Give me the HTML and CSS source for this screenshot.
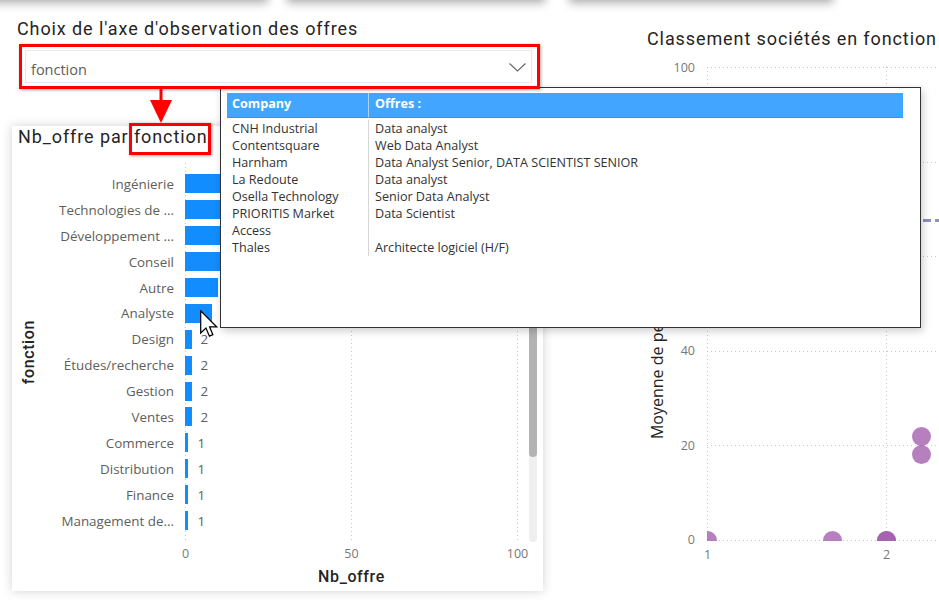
FILE: index.html
```html
<!DOCTYPE html>
<html lang="fr">
<head>
<meta charset="utf-8">
<title>Offres</title>
<link rel="stylesheet" href="styles.css">
</head>
<body>
<div class="top-cards">
  <div class="stub stub-1"></div>
  <div class="stub stub-2"></div>
  <div class="stub stub-3"></div>
</div>

<div class="canvas">
  <div class="left-col">
    <section class="slicer">
      <h2 class="v-title">Choix de l'axe d'observation des offres</h2>
      <div class="dropdown">
        <span>fonction</span>
        <svg class="chev" width="17" height="9" viewBox="0 0 17 9"><polyline points="0.5,0.5 8.5,8 16.5,0.5" fill="none" stroke="#666" stroke-width="1.1"/></svg>
      </div>
    </section>

    <section class="bar-card">
      <h2 class="v-title">Nb_offre par fonction</h2>
      <div class="bar-body">
        <div class="y-title"><span>fonction</span></div>
        <div class="bar-main">
          <div class="bar-grid">
            <div class="gridlines"><i></i><i></i><i></i></div>
            <div class="cat">Ingénierie</div><div class="val-cell"><div class="bar" style="width:99.6px"></div></div>
            <div class="cat">Technologies de ...</div><div class="val-cell"><div class="bar" style="width:66.4px"></div></div>
            <div class="cat">Développement ...</div><div class="val-cell"><div class="bar" style="width:49.8px"></div></div>
            <div class="cat">Conseil</div><div class="val-cell"><div class="bar" style="width:43.2px"></div></div>
            <div class="cat">Autre</div><div class="val-cell"><div class="bar" style="width:33.2px"></div></div>
            <div class="cat">Analyste</div><div class="val-cell"><div class="bar" style="width:26.6px"></div></div>
            <div class="cat">Design</div><div class="val-cell"><div class="bar" style="width:6.6px"></div><span class="val">2</span></div>
            <div class="cat">Études/recherche</div><div class="val-cell"><div class="bar" style="width:6.6px"></div><span class="val">2</span></div>
            <div class="cat">Gestion</div><div class="val-cell"><div class="bar" style="width:6.6px"></div><span class="val">2</span></div>
            <div class="cat">Ventes</div><div class="val-cell"><div class="bar" style="width:6.6px"></div><span class="val">2</span></div>
            <div class="cat">Commerce</div><div class="val-cell"><div class="bar" style="width:3.4px"></div><span class="val">1</span></div>
            <div class="cat">Distribution</div><div class="val-cell"><div class="bar" style="width:3.4px"></div><span class="val">1</span></div>
            <div class="cat">Finance</div><div class="val-cell"><div class="bar" style="width:3.4px"></div><span class="val">1</span></div>
            <div class="cat">Management de...</div><div class="val-cell"><div class="bar" style="width:3.4px"></div><span class="val">1</span></div>
          </div>
          <div class="x-ticks"><span>0</span><span>50</span><span>100</span></div>
          <div class="x-title">Nb_offre</div>
        </div>
        <div class="scroll"><div class="thumb"></div></div>
      </div>
    </section>
  </div>

  <section class="scatter-card">
    <h2 class="v-title">Classement sociétés en fonction</h2>
    <div class="sc-body">
      <div class="sc-ytitle"><span>Moyenne de pertinence</span></div>
      <div class="sc-yticks"><span>100</span><span>80</span><span>60</span><span>40</span><span>20</span><span>0</span></div>
      <div class="sc-main">
        <div class="plot">
          <div class="hlines"><i></i><i></i><i></i><i></i><i></i><i></i></div>
          <div class="vline vline-1"></div>
          <div class="vline vline-2"></div>
          <div class="avg-line"></div>
          <span class="dot" style="left:0px;top:473px"></span>
          <span class="dot" style="left:125px;top:473px"></span>
          <span class="dot" style="left:179px;top:473px"></span>
          <span class="dot" style="left:179px;top:473px"></span>
          <span class="dot" style="left:214px;top:369px"></span>
          <span class="dot" style="left:214px;top:387px"></span>
        </div>
        <div class="sc-xticks"><span>1</span><span>2</span></div>
      </div>
    </div>
  </section>
</div>

<div class="tooltip">
  <div class="tt-table">
    <div class="tt-head c1">Company</div><div class="tt-head c2">Offres :</div>
    <div class="tt-cell c1">CNH Industrial</div><div class="tt-cell c2">Data analyst</div>
    <div class="tt-cell c1">Contentsquare</div><div class="tt-cell c2">Web Data Analyst</div>
    <div class="tt-cell c1">Harnham</div><div class="tt-cell c2">Data Analyst Senior, DATA SCIENTIST SENIOR</div>
    <div class="tt-cell c1">La Redoute</div><div class="tt-cell c2">Data analyst</div>
    <div class="tt-cell c1">Osella Technology</div><div class="tt-cell c2">Senior Data Analyst</div>
    <div class="tt-cell c1">PRIORITIS Market</div><div class="tt-cell c2">Data Scientist</div>
    <div class="tt-cell c1">Access</div><div class="tt-cell c2"></div>
    <div class="tt-cell c1">Thales</div><div class="tt-cell c2">Architecte logiciel (H/F)</div>
  </div>
</div>

<div class="anno-box anno-dd"></div>
<div class="anno-box anno-title"></div>
<svg class="anno-arrow" width="22" height="37" viewBox="0 0 22 37">
  <rect x="9.5" y="0" width="3" height="15" fill="#ff0000"/>
  <polygon points="0,13 22,13 11,36" fill="#ff0000"/>
</svg>

<svg class="cursor" width="18" height="28" viewBox="0 0 13 20">
  <path d="M0.5,0.5 L0.5,16.5 L4.3,12.9 L6.8,18.8 L9.3,17.7 L6.9,12 L12,12 Z" fill="#fff" stroke="#000" stroke-width="0.9" stroke-linejoin="miter"/>
</svg>
</body>
</html>
```

FILE: styles.css
```css
* { box-sizing: border-box; margin: 0; padding: 0; }

html, body {
  width: 939px;
  height: 613px;
  overflow: hidden;
  background: #ffffff;
}

body {
  position: relative;
  font-family: "Open Sans", "Noto Sans", sans-serif;
  color: #252423;
}

/* cards cut by the top edge */
.top-cards { display: flex; height: 0; }
.stub {
  height: 20px;
  margin-top: -20px;
  background: #fff;
  box-shadow: 0 3px 10px rgba(0, 0, 0, 0.32);
}
.stub-1 { margin-left: -10px; width: 278px; }
.stub-2 { margin-left: 19px; width: 258px; }
.stub-3 { margin-left: 24px; width: 264px; }

.canvas {
  display: flex;
  align-items: flex-start;
  padding-top: 16px;
}

.v-title {
  font-family: Roboto, "DejaVu Sans", sans-serif;
  font-weight: 400;
  font-size: 18px;
  line-height: 22px;
  letter-spacing: 0.9px;
  color: #252423;
  white-space: nowrap;
}

/* left column */
.left-col {
  margin-left: 11px;
  width: 534px;
  flex: none;
  display: flex;
  flex-direction: column;
}

.slicer {
  height: 110px;
  background: #fff;
  padding: 2px 0 0 6px;
}

.dropdown {
  margin: 10px 0 0 8px;
  width: 507px;
  height: 33px;
  border: 1px solid #e8e8e8;
  display: flex;
  align-items: center;
  justify-content: space-between;
  padding: 5px 5px 0 5px;
  font-size: 14.5px;
  color: #605e5c;
}
.chev { display: block; margin-top: -3px; }

.bar-card {
  margin-left: 1px;
  width: 531px;
  height: 465px;
  background: #fff;
  box-shadow: 0 0 10px rgba(0, 0, 0, 0.18);
}
.bar-card .v-title { padding-left: 6px; }

.bar-body {
  display: flex;
  align-items: flex-start;
  margin-top: 15px;
}

.y-title {
  width: 32px;
  height: 378px;
  display: flex;
  align-items: center;
  justify-content: center;
  margin-right: 2px;
}
.y-title span {
  writing-mode: vertical-rl;
  transform: rotate(180deg);
  font-family: Roboto, sans-serif;
  font-weight: 500;
  font-size: 16px;
  letter-spacing: 0.6px;
  color: #252423;
}

.bar-main { width: 483px; }

.bar-grid {
  position: relative;
  display: grid;
  grid-template-columns: 128px 344px;
  column-gap: 11px;
  grid-auto-rows: 25.9px;
  padding: 8px 0 7px;
}

.gridlines {
  position: absolute;
  top: 0;
  bottom: 0;
  left: 139px;
  width: 333px;
  display: flex;
  justify-content: space-between;
}
.gridlines i {
  width: 1px;
  background: repeating-linear-gradient(to bottom, #c8c8c8 0 1px, transparent 1px 4px);
}

.cat {
  align-self: center;
  text-align: right;
  white-space: nowrap;
  font-size: 13.4px;
  line-height: 18px;
  color: #605e5c;
}

.val-cell {
  position: relative;
  display: flex;
  align-items: center;
}
.bar {
  height: 19px;
  background: #118dff;
  flex: none;
}
.val {
  margin-left: 9px;
  font-size: 13.4px;
  line-height: 18px;
  color: #605e5c;
}

.x-ticks {
  margin: 5px 0 0 139px;
  width: 333px;
  height: 18px;
  display: flex;
  justify-content: space-between;
}
.x-ticks span {
  width: 1px;
  display: flex;
  justify-content: center;
  font-size: 12.5px;
  line-height: 18px;
  color: #777;
}

.x-title {
  margin: 4px 0 0 139px;
  width: 333px;
  text-align: center;
  font-family: Roboto, sans-serif;
  font-weight: 500;
  font-size: 16px;
  letter-spacing: 0.6px;
  line-height: 20px;
  color: #252423;
}

.scroll {
  width: 8px;
  height: 379px;
  background: #efefef;
  border-radius: 4px;
}
.thumb {
  height: 294px;
  background: #b3b3b3;
  border-radius: 4px;
}

/* scatter chart */
.scatter-card {
  flex: none;
  margin-left: 55px;
  margin-top: 12px;
  width: 339px;
}
.scatter-card .v-title { padding-left: 47px; }

.sc-body {
  display: flex;
  align-items: flex-start;
  margin-top: 17px;
}

.sc-ytitle {
  margin-left: 45px;
  width: 24px;
  height: 474px;
  display: flex;
  flex-direction: column;
  justify-content: flex-end;
  align-items: center;
  padding-bottom: 102px;
}
.sc-ytitle span {
  writing-mode: vertical-rl;
  transform: rotate(180deg);
  white-space: nowrap;
  font-size: 16px;
  color: #252423;
}

.sc-yticks {
  width: 26px;
  height: 474px;
  display: flex;
  flex-direction: column;
  justify-content: space-between;
}
.sc-yticks span {
  height: 1px;
  display: flex;
  align-items: center;
  justify-content: flex-end;
  font-size: 12.5px;
  line-height: 16px;
  color: #777;
}

.sc-main {
  margin-left: 12px;
  width: 232px;
}

.plot {
  position: relative;
  height: 474px;
  overflow: hidden;
}

.hlines {
  position: absolute;
  inset: 0;
  display: flex;
  flex-direction: column;
  justify-content: space-between;
}
.hlines i {
  height: 1px;
  background: repeating-linear-gradient(to right, #c8c8c8 0 1px, transparent 1px 4px);
}

.vline {
  position: absolute;
  top: 0;
  bottom: 0;
  width: 1px;
  background: repeating-linear-gradient(to bottom, #c8c8c8 0 1px, transparent 1px 4px);
}
.vline-1 { left: 0; }
.vline-2 { left: 179px; }

.avg-line {
  position: absolute;
  left: 0;
  right: 0;
  top: 152px;
  height: 3px;
  background: repeating-linear-gradient(to right, #8d90c9 0 8px, transparent 8px 12px);
}

.dot {
  position: absolute;
  width: 19px;
  height: 19px;
  margin: -9.5px 0 0 -9.5px;
  border-radius: 50%;
  background: rgba(160, 92, 170, 0.78);
}

.sc-xticks {
  display: flex;
  gap: 178px;
  margin-top: 6px;
}
.sc-xticks span {
  width: 1px;
  display: flex;
  justify-content: center;
  font-size: 12.5px;
  line-height: 16px;
  color: #777;
}

/* tooltip overlay */
.tooltip {
  position: absolute;
  left: 220px;
  top: 87px;
  width: 701px;
  height: 241px;
  background: #fff;
  border: 1px solid #333;
  box-shadow: 2px 3px 8px rgba(0, 0, 0, 0.2);
  padding: 5px 17px 0 6px;
  font-size: 12.6px;
  color: #333;
}
.tt-table {
  display: grid;
  grid-template-columns: 142px 1fr;
}
.tt-head {
  height: 25px;
  margin-bottom: 2px;
  background: #42a5ff;
  color: #fff;
  font-weight: 700;
  line-height: 22px;
  padding-left: 5px;
  border-bottom: 1px solid #2a96ff;
}
.tt-cell {
  line-height: 17px;
  height: 17px;
  padding-left: 5px;
  white-space: nowrap;
}
.tt-head.c1 { border-right: 1px solid #a8d4ff; }
.tt-cell.c1 { border-right: 1px solid #d6d6d6; }
.tt-head.c2, .tt-cell.c2 { padding-left: 6px; }

/* annotations */
.anno-box {
  position: absolute;
  border: 3px solid #ff0000;
  box-shadow: 1px 1px 3px rgba(0, 0, 0, 0.35);
}
.anno-dd { left: 19px; top: 44px; width: 521px; height: 45px; }
.anno-title { left: 129px; top: 123px; width: 82px; height: 32px; }

.anno-arrow {
  position: absolute;
  left: 150px;
  top: 87px;
}

.cursor {
  position: absolute;
  left: 200px;
  top: 310px;
}
```
